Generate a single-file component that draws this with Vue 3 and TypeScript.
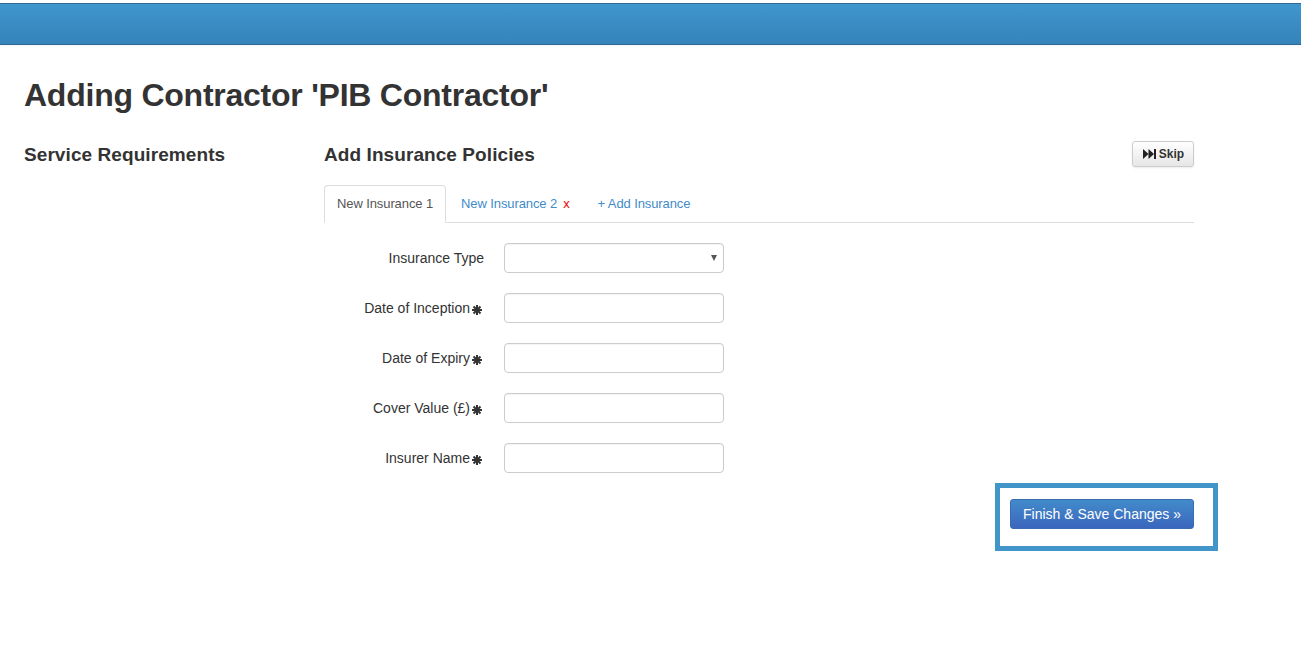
<script setup lang="ts">
const fields = [
  { label: 'Date of Inception' },
  { label: 'Date of Expiry' },
  { label: 'Cover Value (£)' },
  { label: 'Insurer Name' },
]
</script>

<template>
  <div class="page">
    <header class="navbar"></header>
    <main class="content">
      <h1 class="title">Adding Contractor 'PIB Contractor'</h1>
      <div class="columns">
        <aside class="side">
          <h2 class="heading">Service Requirements</h2>
        </aside>
        <section class="main">
          <div class="head-row">
            <h2 class="heading">Add Insurance Policies</h2>
            <button class="skip" type="button">
              <svg class="skip-icon" viewBox="0 0 13 10" width="13" height="10" aria-hidden="true">
                <path d="M0 0l5.500 5L0 10zM5.500 0L11 5l-5.500 5zM11 0h2v10h-2z" fill="#222" />
              </svg>
              Skip
            </button>
          </div>
          <nav class="tabs">
            <a class="tab active">New Insurance 1</a>
            <a class="tab">New Insurance 2<span class="close">x</span></a>
            <a class="tab">+ Add Insurance</a>
          </nav>
          <form class="form">
            <div class="row">
              <label class="label">Insurance Type</label>
              <div class="select"><span class="caret"></span></div>
            </div>
            <div v-for="f in fields" :key="f.label" class="row">
              <label class="label">
                <span class="label-text">{{ f.label }}</span>
                <svg class="req" viewBox="0 0 10 10" width="10" height="10" aria-hidden="true">
                  <path d="M5 0v10M0 5h10M1.500 1.500l7 7M8.500 1.500l-7 7" stroke="#333" stroke-width="2" fill="none" />
                </svg>
              </label>
              <div class="input"></div>
            </div>
          </form>
          <div class="actions">
            <button class="finish" type="button">Finish &amp; Save Changes »</button>
            <div class="highlight"></div>
          </div>
        </section>
      </div>
    </main>
  </div>
</template>

<style>
html, body { margin: 0; background: #fff; }
</style>

<style scoped>
.page {
  height: 669px;
  overflow: hidden;
  padding-top: 3px;
  box-sizing: border-box;
  font-family: "Liberation Sans", Arial, sans-serif;
  color: #333;
  background: #fff;
}
.navbar {
  height: 42px;
  box-sizing: border-box;
  border-top: 1px solid #2d6a96;
  border-bottom: 1px solid #2d6a96;
  background: linear-gradient(#3f97cd, #3583bb);
  box-shadow: 0 1px 3px rgba(0, 0, 0, 0.05);
}
.content { padding: 0 24px; }
.title {
  margin: 0;
  padding-top: 31px;
  font-size: 32px;
  letter-spacing: -0.24px;
  line-height: 38px;
  font-weight: 700;
  color: #333;
}
.columns {
  display: flex;
  margin-top: 27px;
}
.side { width: 300px; flex: none; }
.main { width: 870px; flex: none; }
.heading {
  margin: 0;
  padding-top: 2px;
  font-size: 19px;
  letter-spacing: 0.08px;
  line-height: 24px;
  font-weight: 700;
  color: #333;
}
.head-row {
  display: flex;
  justify-content: space-between;
  align-items: center;
  height: 26px;
}
.skip {
  display: flex;
  align-items: center;
  gap: 3px;
  width: 62px;
  height: 26px;
  padding: 0 0 0 1px;
  justify-content: center;
  border: 1px solid #ccc;
  border-radius: 3px;
  background: linear-gradient(#fff, #e6e6e6);
  box-shadow: 0 1px 2px rgba(0, 0, 0, 0.08);
  font: 700 12px "Liberation Sans", Arial, sans-serif;
  color: #333;
}
.skip-icon { flex: none; }
.tabs {
  display: flex;
  gap: 2px;
  margin-top: 18px;
  height: 38px;
  box-sizing: border-box;
  border-bottom: 1px solid #ddd;
}
.tab {
  display: block;
  height: 38px;
  box-sizing: border-box;
  padding: 0 12px;
  border: 1px solid transparent;
  font-size: 13px;
  letter-spacing: -0.1px;
  line-height: 35px;
  color: #428bca;
}
.tab.active {
  color: #555;
  background: #fff;
  border-color: #ddd #ddd #fff;
  border-radius: 4px 4px 0 0;
}
.close {
  margin-left: 6px;
  color: #e00;
  font-size: 13px;
}
.form { padding-top: 20px; }
.row {
  display: flex;
  align-items: center;
  height: 30px;
  margin-bottom: 20px;
}
.label {
  display: flex;
  justify-content: flex-end;
  align-items: center;
  width: 160px;
  flex: none;
  font-size: 14px;
  line-height: 20px;
  color: #333;
}
.req {
  flex: none;
  margin: 4px 2px 0 2px;
}
.input, .select {
  margin-left: 20px;
  width: 220px;
  height: 30px;
  box-sizing: border-box;
  border: 1px solid #ccc;
  border-radius: 4px;
  background: #fff;
  box-shadow: inset 0 1px 1px rgba(0, 0, 0, 0.05);
}
.select {
  display: flex;
  align-items: center;
  justify-content: flex-end;
  padding-right: 6px;
}
.caret {
  width: 0;
  height: 0;
  margin-top: -1px;
  border-left: 3px solid transparent;
  border-right: 3px solid transparent;
  border-top: 6px solid #555;
}
.actions {
  position: relative;
  display: flex;
  justify-content: flex-end;
  margin-top: -24px;
  padding-top: 30px;
}
.finish {
  width: 184px;
  height: 30px;
  padding: 0;
  border: 1px solid #3a6ab0;
  border-radius: 3px;
  background: linear-gradient(#428bca, #3b66bd);
  font: 14px "Liberation Sans", Arial, sans-serif;
  color: #fff;
}
.highlight {
  position: absolute;
  right: -24px;
  top: 14px;
  width: 223px;
  height: 68px;
  box-sizing: border-box;
  border: 5px solid #4195c8;
  pointer-events: none;
}
</style>
